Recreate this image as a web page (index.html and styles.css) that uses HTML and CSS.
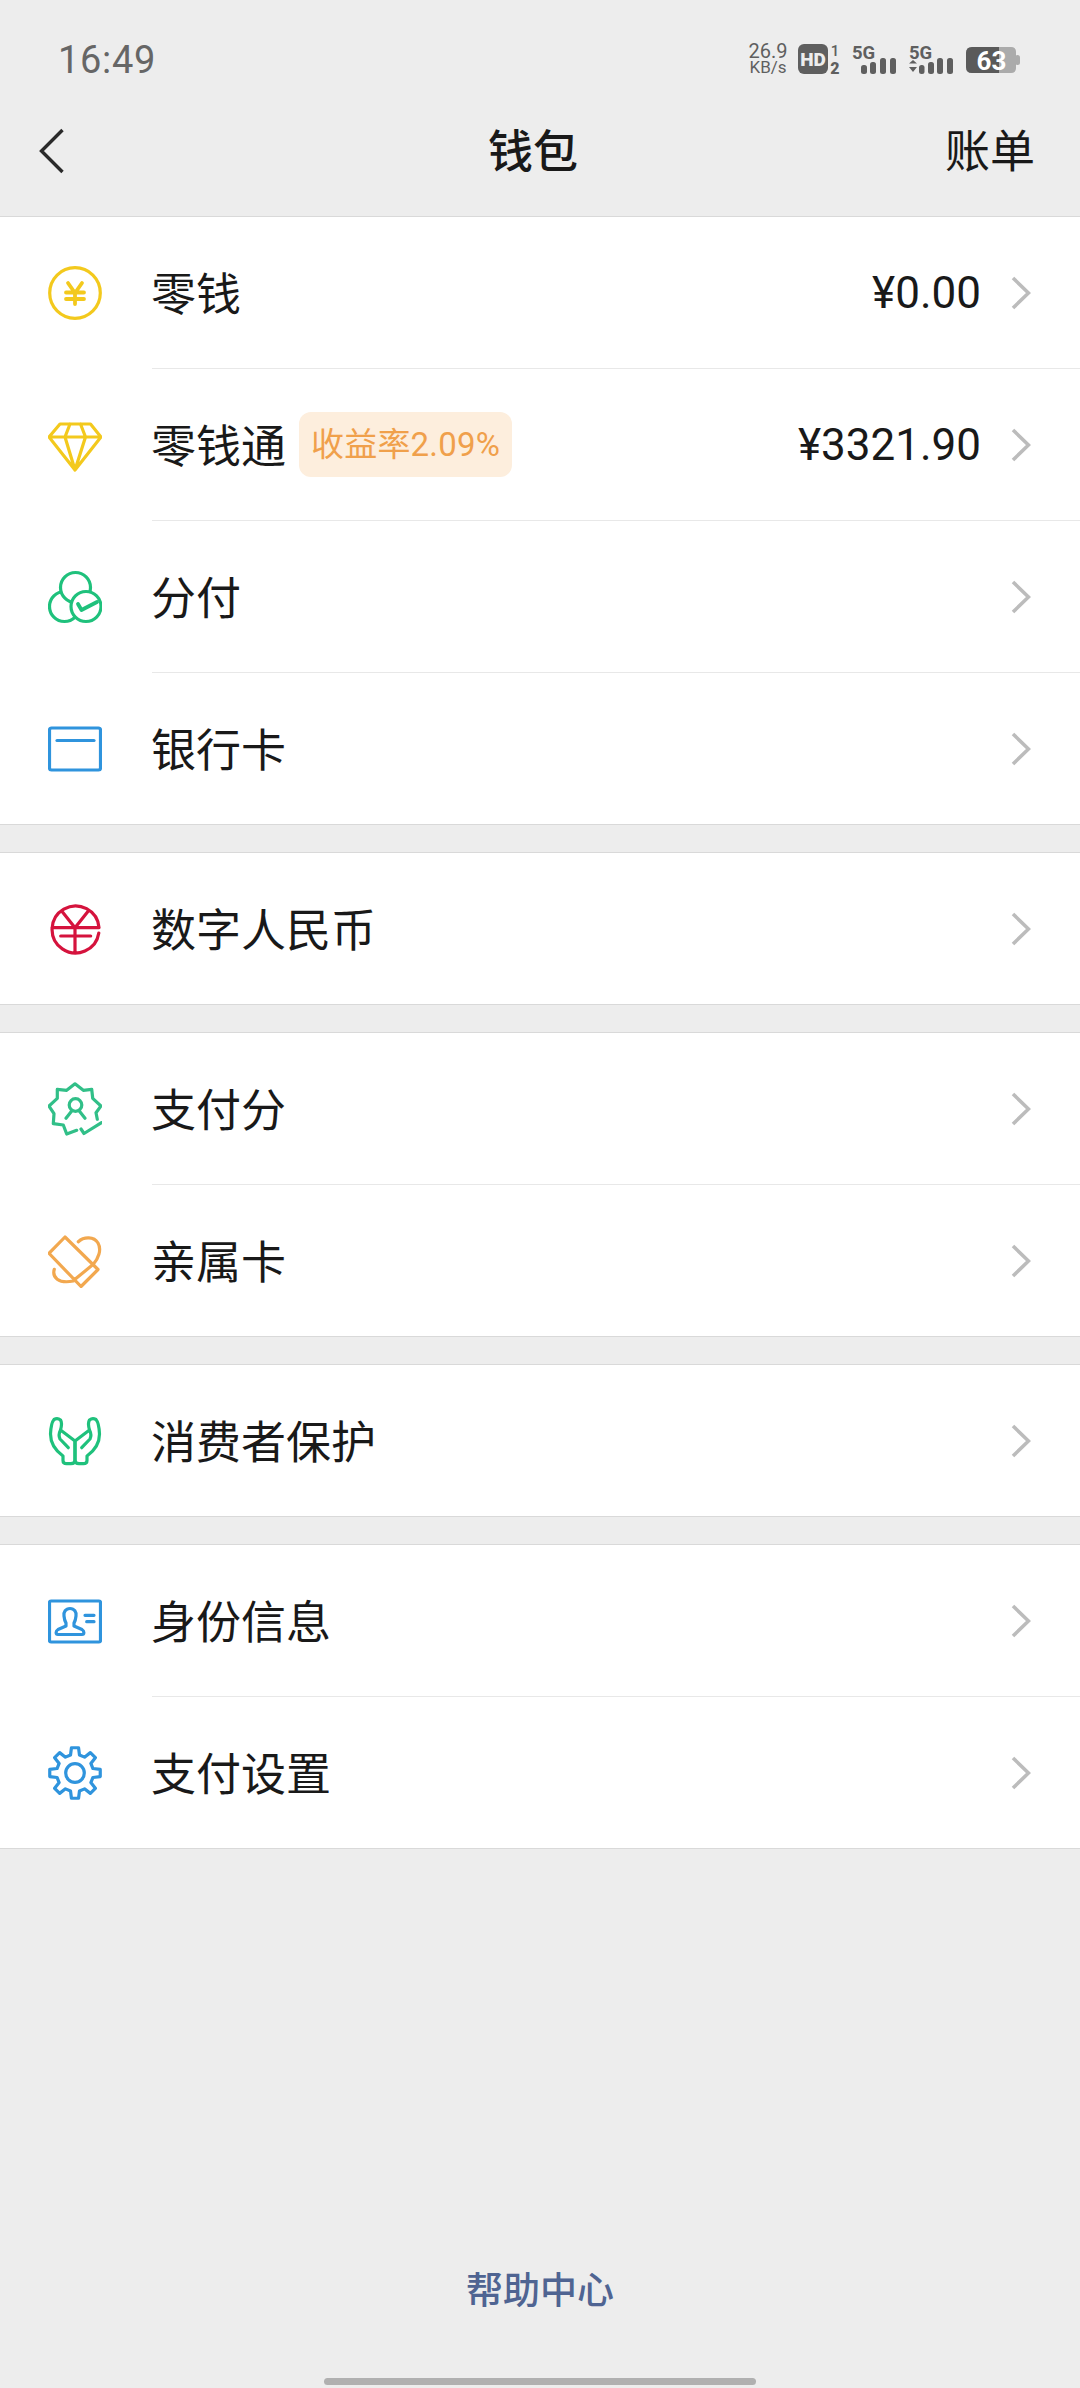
FILE: index.html
```html
<!DOCTYPE html>
<html>
	<head>
		<meta charset="utf-8">
		<title>钱包</title>
		<link rel="stylesheet" href="styles.css">
	</head>
	<body>
		<svg class="sprite" width="0" height="0">
			<symbol id="arrow" viewBox="0 0 20 34">
				<path d="M2 2 L17.5 17 L2 32" fill="none" stroke="#bcbcbc" stroke-width="3.6"/>
			</symbol>
		</svg>
		<div class="page">
			<header class="top">
				<div class="status">
					<span class="time">16:49</span>
					<div class="status-icons">
						<div class="speed"><span>26.9</span><span class="speed-unit">KB/s</span></div>
						<svg class="st-svg" width="42" height="30" viewBox="0 0 42 30">
							<rect x="0" y="0" width="30" height="30" rx="6" fill="#5f5f5f"/>
							<text x="15" y="21.5" class="st-hd-text" text-anchor="middle">HD</text>
							<text x="37" y="12" class="st-num-1" text-anchor="middle">1</text>
							<text x="37" y="29.5" class="st-num-2" text-anchor="middle">2</text>
						</svg>
						<svg class="st-svg" width="45" height="30" viewBox="0 0 45 30" fill="#5f5f5f">
							<text x="0" y="15" class="st-5g">5G</text>
							<rect x="9" y="21" width="6" height="9" rx="2.5"/>
							<rect x="18" y="18" width="6" height="12" rx="2.5"/>
							<rect x="28" y="14" width="6" height="16" rx="2.5"/>
							<rect x="38" y="14" width="6" height="16" rx="2.5"/>
						</svg>
						<svg class="st-svg" width="45" height="30" viewBox="0 0 45 30" fill="#5f5f5f">
							<text x="0" y="15" class="st-5g">5G</text>
							<path d="M0 19.5 L4 16 L8 19.5 Z M0 23 L8 23 L4 28 Z"/>
							<rect x="10" y="21" width="5.5" height="9" rx="2.5"/>
							<rect x="19" y="18" width="6" height="12" rx="2.5"/>
							<rect x="28" y="14" width="6" height="16" rx="2.5"/>
							<rect x="38" y="14" width="6" height="16" rx="2.5"/>
						</svg>
						<svg class="st-svg" width="54" height="30" viewBox="0 0 54 30">
							<path d="M6 3 H45 Q50 3 50 8 V24 Q50 29 45 29 H6 Q0 29 0 23 V9 Q0 3 6 3 Z" fill="#ababab"/>
							<path d="M6 3 H33 V29 H6 Q0 29 0 23 V9 Q0 3 6 3 Z" fill="#5a5a5a"/>
							<rect x="49" y="11" width="5" height="10" rx="2.5" fill="#ababab"/>
							<text x="25.5" y="26" class="st-batt" text-anchor="middle">63</text>
						</svg>
					</div>
				</div>
				<nav class="nav">
					<svg class="nav-back" width="25" height="46" viewBox="0 0 25 46">
						<path d="M23.5 2 L2.5 23 L23.5 44" fill="none" stroke="#2a2a2a" stroke-width="3.4"/>
					</svg>
					<h1 class="nav-title">钱包</h1>
					<a class="nav-link">账单</a>
				</nav>
			</header>

			<section class="group">
				<div class="row">
					<svg class="ico ico-yellow" viewBox="0 0 54 54">
						<circle cx="27" cy="27" r="25.3"/>
						<path class="ico-bold" d="M20 17 L27 27 L34 17 M18 26.5 H36 M18 33 H36 M27 27 V38"/>
					</svg>
					<div class="row-body">
						<span class="row-name">零钱</span>
						<span class="row-val">¥0.00</span>
						<svg class="row-arrow"><use href="#arrow"/></svg>
					</div>
				</div>
				<div class="row">
					<svg class="ico ico-yellow" viewBox="0 0 54 54">
						<path d="M12 6 H42.5 L53 19 L27 52 L1 19 Z M1 19 H53 M22 6 L17 19 L27 52 L37.5 19 L32.5 6"/>
					</svg>
					<div class="row-body">
						<span class="row-name">零钱通</span>
						<span class="tag">收益率2.09%</span>
						<span class="row-val">¥3321.90</span>
						<svg class="row-arrow"><use href="#arrow"/></svg>
					</div>
				</div>
				<div class="row">
					<svg class="ico ico-green" viewBox="0 0 54 54">
						<circle cx="16.5" cy="36.5" r="15"/>
						<circle cx="27.5" cy="17.5" r="15" fill="#fff"/>
						<circle cx="38" cy="36.5" r="15" fill="#fff"/>
						<path class="ico-bold" d="M30 34 L33.5 40 L49 32"/>
					</svg>
					<div class="row-body">
						<span class="row-name">分付</span>
						<svg class="row-arrow"><use href="#arrow"/></svg>
					</div>
				</div>
				<div class="row">
					<svg class="ico ico-blue" viewBox="0 0 54 54">
						<rect x="1.5" y="6" width="51" height="42" rx="2"/>
						<path d="M9 18.5 H46"/>
					</svg>
					<div class="row-body">
						<span class="row-name">银行卡</span>
						<svg class="row-arrow"><use href="#arrow"/></svg>
					</div>
				</div>
			</section>

			<section class="group">
				<div class="row">
					<svg class="ico ico-red" viewBox="0 0 54 54">
						<path d="M50.8 31 A23.5 23.5 0 1 1 51 25.7 H4 M13.7 9 L27 25.7 L40.3 9 M27 25.7 V50 M12.7 34 H42.7"/>
					</svg>
					<div class="row-body">
						<span class="row-name">数字人民币</span>
						<svg class="row-arrow"><use href="#arrow"/></svg>
					</div>
				</div>
			</section>

			<section class="group">
				<div class="row">
					<svg class="ico ico-teal" viewBox="0 0 54 54">
						<path d="M49.3 37.3 L48 30.7 L53 24 L44.7 16.3 L43.7 7.3 L35.3 8.3 L27 1.8 L18.7 8.3 L9.3 7.3 L9.3 16.3 L1 24 L6 31.7 L5.3 41.7 L15.3 43 L18.7 52 L28.7 48.3"/>
						<circle cx="27.5" cy="23" r="6.3"/>
						<path d="M23.7 29 L18 36.3 M31.3 29 L37 36.3 M33 47 L36 51.5 L53.5 40.7"/>
					</svg>
					<div class="row-body">
						<span class="row-name">支付分</span>
						<svg class="row-arrow"><use href="#arrow"/></svg>
					</div>
				</div>
				<div class="row">
					<svg class="ico ico-orange" viewBox="0 0 54 54">
						<path d="M17 3 L1 19.3 L33 52.5 L50 35.5 Z M27 45.3 L45.3 30.3"/>
						<path d="M30.3 7.7 C36 2.5 46 2.5 50 9 C54 16 50 25 45.3 30.3 M6.3 35.3 C4 43 10 50 25.3 47"/>
					</svg>
					<div class="row-body">
						<span class="row-name">亲属卡</span>
						<svg class="row-arrow"><use href="#arrow"/></svg>
					</div>
				</div>
			</section>

			<section class="group">
				<div class="row">
					<svg class="ico ico-green" viewBox="0 0 54 54">
						<path d="M27 27 V46 Q27 49.7 23 49.7 H18.5 Q15 49.7 15 46.5 V42 Q2.5 33 2.5 20 Q3 9 6 5.5 Q9.5 3.5 12.5 6 Q14.5 9 12.5 16 L27 27 M12.5 16 Q10 21 12 25 L20.3 33.7"/>
						<path d="M27 27 V46 Q27 49.7 31 49.7 H35.5 Q39 49.7 39 46.5 V42 Q51.5 33 51.5 20 Q51 9 48 5.5 Q44.5 3.5 41.5 6 Q39.5 9 41.5 16 L27 27 M41.5 16 Q44 21 42 25 L33.7 33.7"/>
					</svg>
					<div class="row-body">
						<span class="row-name">消费者保护</span>
						<svg class="row-arrow"><use href="#arrow"/></svg>
					</div>
				</div>
			</section>

			<section class="group">
				<div class="row">
					<svg class="ico ico-blue" viewBox="0 0 54 54">
						<rect x="1.5" y="7" width="51" height="41" rx="1.5"/>
						<path d="M22 14.5 C17.5 14.5 15.5 18 16 22 C16.3 25 17 27.5 18 29 V32 L10 35.5 C7.5 37 7.5 40.5 10 40.5 H34 C36.5 40.5 36.5 37 34 35.5 L26 32 V29 C27 27.5 27.7 25 28 22 C28.5 18 26.5 14.5 22 14.5 Z M37 21.3 H46 M38.7 27.7 H46"/>
					</svg>
					<div class="row-body">
						<span class="row-name">身份信息</span>
						<svg class="row-arrow"><use href="#arrow"/></svg>
					</div>
				</div>
				<div class="row">
					<svg class="ico ico-blue" viewBox="0 0 54 54">
						<path transform="translate(27 27)" d="M-4.48 -17.95 L-3.55 -25.25 H3.55 L4.48 -17.95 L9.53 -15.86 L15.35 -20.37 L20.37 -15.35 L15.86 -9.53 L17.95 -4.48 L25.25 -3.55 V3.55 L17.95 4.48 L15.86 9.53 L20.37 15.35 L15.35 20.37 L9.53 15.86 L4.48 17.95 L3.55 25.25 H-3.55 L-4.48 17.95 L-9.53 15.86 L-15.35 20.37 L-20.37 15.35 L-15.86 9.53 L-17.95 4.48 L-25.25 3.55 V-3.55 L-17.95 -4.48 L-15.86 -9.53 L-20.37 -15.35 L-15.35 -20.37 L-9.53 -15.86 Z"/>
						<circle cx="27" cy="27" r="9.3"/>
					</svg>
					<div class="row-body">
						<span class="row-name">支付设置</span>
						<svg class="row-arrow"><use href="#arrow"/></svg>
					</div>
				</div>
			</section>

			<footer class="foot">
				<a class="help">帮助中心</a>
				<div class="home-bar"></div>
			</footer>
		</div>
	</body>
</html>
```

FILE: styles.css
```css
*{margin: 0; padding: 0; box-sizing: border-box;}
html, body{background: #ededed;}
body{font-family: "Roboto", "Noto Sans CJK SC", sans-serif; color: #191919;}
.sprite{display: block; height: 0;}
.page{display: flex; flex-direction: column; width: 1080px; height: 2388px; overflow: hidden;}

.top{height: 216px; display: flex; flex-direction: column;}
.status{height: 100px; padding: 0 60px 0 58px; display: flex; justify-content: space-between;}
.time{font-size: 38px; line-height: 44px; margin-top: 38px; color: #666; letter-spacing: 0.7px;}
.status-icons{display: flex; gap: 12px; padding-top: 44px; align-items: flex-start;}
.st-svg{overflow: visible;}
.speed{display: flex; flex-direction: column; align-items: center; width: 36px; margin-top: -2px; margin-right: 0; font-size: 20px; line-height: 18px; color: #5f5f5f; white-space: nowrap;}
.speed-unit{font-size: 17px; line-height: 15px;}
.st-hd-text{font: 900 19px "Roboto", sans-serif; fill: #ededed;}
.st-num-1{font: 500 15px "Roboto", sans-serif; fill: #5f5f5f;}
.st-num-2{font: 900 16px "Roboto", sans-serif; fill: #5f5f5f;}
.st-5g{font: 700 18.5px "Roboto", sans-serif;}
.st-batt{font: 700 26px "Roboto", sans-serif; fill: #fff;}

.nav{flex: 1; display: grid; grid-template-columns: 1fr auto 1fr; align-items: center; padding: 0 45px 14px 39px;}
.nav-title{font-size: 45px; line-height: 60px; font-weight: 500; margin-right: 8px; padding-top: 4px;}
.nav-link{justify-self: end; font-size: 45px; line-height: 60px; padding-top: 4px;}

.group{background: #fff; border-top: 1px solid #d9d9d9; border-bottom: 1px solid #d9d9d9; margin-bottom: 27px;}
.row{height: 152px; display: flex; align-items: center; padding-left: 48px;}
.row:last-child{height: 151px;}
.ico{width: 54px; height: 54px; margin-right: 50px; flex: none; fill: none; stroke-width: 3.2; stroke-linejoin: round; stroke-linecap: round;}
.ico-bold{stroke-width: 3.8;}
.ico-yellow{stroke: #f3c91d;}
.ico-green{stroke: #1fc17c;}
.ico-teal{stroke: #31bf88;}
.ico-blue{stroke: #2f94dd;}
.ico-red{stroke: #d5133d;}
.ico-orange{stroke: #f2a84f;}
.row-body{flex: 1; height: 100%; display: flex; align-items: center; padding-right: 49px; border-bottom: 1px solid #e8e8e8;}
.row:last-child .row-body{border-bottom: none;}
.row-name{font-size: 45px; line-height: 60px; margin-left: -1px; padding-top: 7px;}
.tag{margin-left: 13px; height: 65px; line-height: 65px; padding: 0 12px; border-radius: 12px; background: #fdeedd; color: #f0a04b; font-size: 33px; letter-spacing: 0.2px;}
.row-val{margin-left: auto; font-size: 44px; line-height: 60px;}
.row-arrow{width: 20px; height: 34px; margin-left: auto; flex: none;}
.row-val + .row-arrow{margin-left: 30px;}

.foot{margin-top: auto; display: flex; flex-direction: column; align-items: center;}
.help{font-size: 37px; line-height: 50px; font-weight: 500; color: #4f6492;}
.home-bar{width: 432px; height: 7px; margin: 61px 0 3px; border-radius: 4px; background: #b0b0b0;}
```
